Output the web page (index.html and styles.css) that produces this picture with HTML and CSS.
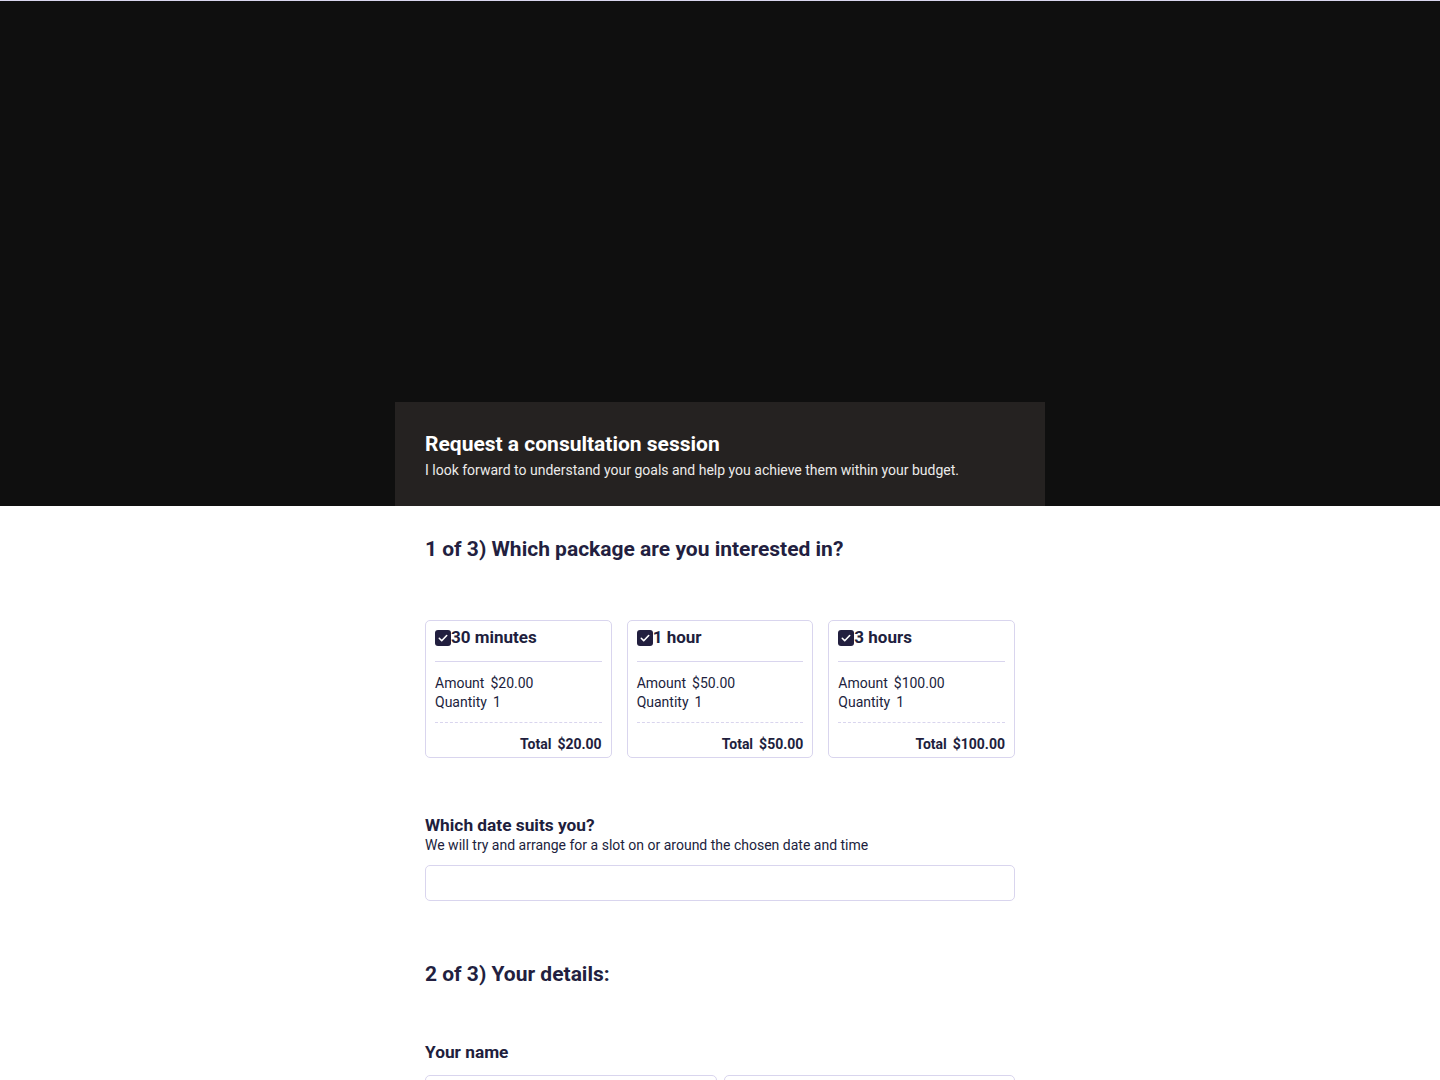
FILE: index.html
```
<!DOCTYPE html>
<html lang="en">
<head>
<meta charset="utf-8">
<title>Request a consultation session</title>
<link rel="stylesheet" href="styles.css">
</head>
<body>
<div class="topline"></div>
<header class="hero">
  <div class="hero-card">
    <h1 class="hero-title">Request a consultation session</h1>
    <p class="hero-sub">I look forward to understand your goals and help you achieve them within your budget.</p>
  </div>
</header>
<main class="content">
  <h2 class="step">1 of 3) Which package are you interested in?</h2>
  <div class="packages">
    <div class="pkg">
      <div class="pkg-head"><span class="check"><svg viewBox="0 0 16 16" width="16" height="16"><path d="M4.3 8.3l2.4 2.4 5-5.2" fill="none" stroke="#fff" stroke-width="1.6" stroke-linecap="round" stroke-linejoin="round"/></svg></span><span class="pkg-title">30 minutes</span></div>
      <div class="pkg-body">
        <div class="row"><span>Amount</span><span>$20.00</span></div>
        <div class="row"><span>Quantity</span><span>1</span></div>
      </div>
      <div class="pkg-total"><span>Total</span><span>$20.00</span></div>
    </div>
    <div class="pkg">
      <div class="pkg-head"><span class="check"><svg viewBox="0 0 16 16" width="16" height="16"><path d="M4.3 8.3l2.4 2.4 5-5.2" fill="none" stroke="#fff" stroke-width="1.6" stroke-linecap="round" stroke-linejoin="round"/></svg></span><span class="pkg-title">1 hour</span></div>
      <div class="pkg-body">
        <div class="row"><span>Amount</span><span>$50.00</span></div>
        <div class="row"><span>Quantity</span><span>1</span></div>
      </div>
      <div class="pkg-total"><span>Total</span><span>$50.00</span></div>
    </div>
    <div class="pkg">
      <div class="pkg-head"><span class="check"><svg viewBox="0 0 16 16" width="16" height="16"><path d="M4.3 8.3l2.4 2.4 5-5.2" fill="none" stroke="#fff" stroke-width="1.6" stroke-linecap="round" stroke-linejoin="round"/></svg></span><span class="pkg-title">3 hours</span></div>
      <div class="pkg-body">
        <div class="row"><span>Amount</span><span>$100.00</span></div>
        <div class="row"><span>Quantity</span><span>1</span></div>
      </div>
      <div class="pkg-total"><span>Total</span><span>$100.00</span></div>
    </div>
  </div>

  <div class="field date-field">
    <label class="label">Which date suits you?</label>
    <p class="help">We will try and arrange for a slot on or around the chosen date and time</p>
    <div class="input"></div>
  </div>

  <h2 class="step step2">2 of 3) Your details:</h2>

  <div class="field name-field">
    <label class="label">Your name</label>
    <div class="name-inputs">
      <div class="input"></div>
      <div class="input"></div>
    </div>
  </div>
</main>
</body>
</html>
```
FILE: styles.css
```
* { box-sizing: border-box; }
html, body { margin: 0; padding: 0; }
body {
  font-family: Roboto, "Liberation Sans", Arial, sans-serif;
  color: #211e3d;
  background: #fff;
  overflow: hidden;
}
.topline { height: 1px; background: #d9d6ee; }
.hero {
  height: 505px;
  background: #0f0f0f;
  display: flex;
  flex-direction: column;
  justify-content: flex-end;
  align-items: center;
}
.hero-card {
  width: 650px;
  background: #252221;
  padding: 30px 30px 26px;
  color: #fff;
}
.hero-title {
  margin: 0;
  font-size: 21px;
  line-height: 24px;
  font-weight: 700;
}
.hero-sub {
  margin: 4px 0 0;
  font-size: 14px;
  line-height: 20px;
  color: #ecebea;
}
.content {
  width: 590px;
  margin: 0 auto;
  padding-top: 31px;
}
.step {
  margin: 0;
  font-size: 21px;
  line-height: 24px;
  font-weight: 700;
  color: #231f40;
}
.packages {
  margin-top: 59px;
  display: grid;
  grid-template-columns: repeat(3, 1fr);
  gap: 15px;
}
.pkg {
  border: 1px solid #d9d5ee;
  border-radius: 5px;
  padding: 5px 9px 3px;
}
.pkg-head {
  display: flex;
  align-items: center;
  height: 22px;
  padding-bottom: 13px;
  box-sizing: content-box;
  border-bottom: 1px solid #d9d5ee;
}
.check {
  width: 16px;
  height: 16px;
  border-radius: 3px;
  background: #221f3f;
  display: inline-flex;
  flex: none;
  margin-top: 1px;
}
.pkg-title {
  font-size: 17px;
  font-weight: 700;
  line-height: 22px;
}
.pkg-body {
  padding: 12px 0 10px;
  border-bottom: 1px dashed #d9d5ee;
  font-size: 14px;
  line-height: 19px;
}
.row span + span, .pkg-total span + span { margin-left: 6px; }
.pkg-total {
  display: flex;
  justify-content: flex-end;
  padding-top: 12px;
  font-size: 14px;
  line-height: 19px;
  font-weight: 700;
}
.field { display: flex; flex-direction: column; }
.date-field { margin-top: 57px; }
.label {
  font-size: 17.3px;
  line-height: 20px;
  font-weight: 700;
}
.help {
  margin: 0;
  font-size: 14px;
  line-height: 20px;
}
.input {
  height: 36px;
  border: 1px solid #d9d5ee;
  border-radius: 5px;
  background: #fff;
}
.date-field .input { margin-top: 10px; }
.step2 { margin-top: 61px; }
.name-field { margin-top: 56px; }
.name-inputs {
  margin-top: 13px;
  display: grid;
  grid-template-columns: 1fr 1fr;
  gap: 7px;
}
```
